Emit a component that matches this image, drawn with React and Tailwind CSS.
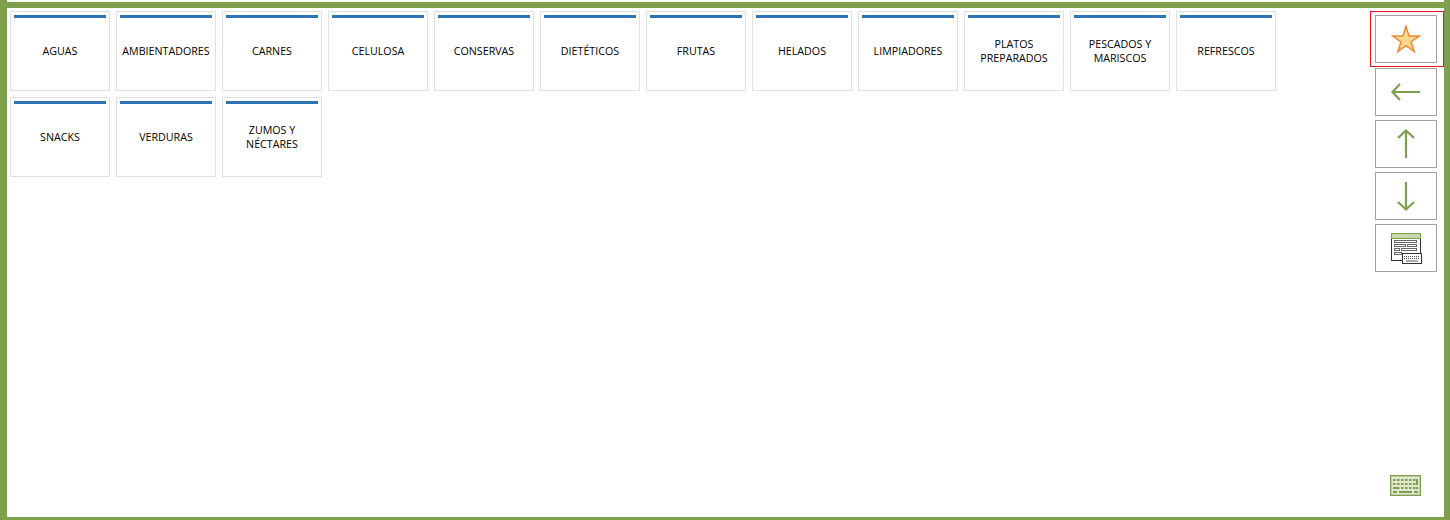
import React from "react";

const categories = [
  ["AGUAS"],
  ["AMBIENTADORES"],
  ["CARNES"],
  ["CELULOSA"],
  ["CONSERVAS"],
  ["DIETÉTICOS"],
  ["FRUTAS"],
  ["HELADOS"],
  ["LIMPIADORES"],
  ["PLATOS", "PREPARADOS"],
  ["PESCADOS Y", "MARISCOS"],
  ["REFRESCOS"],
  ["SNACKS"],
  ["VERDURAS"],
  ["ZUMOS Y", "NÉCTARES"],
];

const GREEN = "#7e9f4c";

const Tile = ({ lines }) => (
  <div className="w-[100px] h-[80px] border border-[#e0e0e0] p-[3px] flex flex-col bg-white">
    <div className="h-[3px] bg-[#2e74b5]"></div>
    <div className="flex-1 pb-[3px] flex flex-col items-center justify-center text-center text-[10.7px] leading-[14px] text-black">
      {lines.map((l) => (
        <span key={l}>{l}</span>
      ))}
    </div>
  </div>
);

const SideButton = ({ children }) => (
  <button className="w-[62px] h-[48px] border border-[#a0a0a0] bg-white flex items-center justify-center">
    {children}
  </button>
);

const Arrow = ({ d }) => (
  <svg width="32" height="32" viewBox="0 0 32 32" fill="none" stroke={GREEN} strokeWidth="2.2">
    <path d={d} />
  </svg>
);

const KeyboardIcon = () => {
  const rows = [4, 8, 12];
  const cols = [3, 7, 11, 15, 19, 23];
  return (
    <svg width="31" height="21" viewBox="0 0 31 21" className="block">
      <rect x="0.5" y="0.5" width="30" height="20" fill="#dfe8cf" stroke={GREEN} />
      <rect x="1.5" y="1.5" width="28" height="18" fill="none" stroke={GREEN} strokeOpacity="0.35" />
      {rows.map((y) =>
        cols.map((x) => <rect key={`${x}-${y}`} x={x} y={y} width="2.5" height="2" fill={GREEN} />)
      )}
      <rect x="3" y="12" width="4" height="2" fill={GREEN} />
      <rect x="26" y="4" width="2" height="6" fill={GREEN} />
      <rect x="26" y="12" width="2" height="2" fill={GREEN} />
      <rect x="3" y="16" width="4" height="2" fill={GREEN} />
      <rect x="9" y="16" width="13" height="2" fill={GREEN} />
      <rect x="24" y="16" width="4" height="2" fill={GREEN} />
    </svg>
  );
};

const FormKeyboardIcon = () => (
  <svg width="32" height="32" viewBox="0 0 32 32" className="block">
    <rect x="1.5" y="1.5" width="29" height="27" fill="#fff" stroke="#333" strokeWidth="1" />
    <rect x="1.5" y="1.5" width="29" height="5" fill="#c6d8ad" stroke={GREEN} />
    <g fill="none" stroke="#666">
      <rect x="4.5" y="8.5" width="22" height="2" />
      <rect x="4.5" y="12.5" width="11" height="2" />
      <rect x="17.5" y="12.5" width="9" height="2" />
      <rect x="4.5" y="16.5" width="5" height="2" />
      <rect x="11.5" y="16.5" width="15" height="2" />
      <rect x="4.5" y="20.5" width="7" height="2" />
    </g>
    <rect x="12.5" y="21.5" width="19" height="10" fill="#fff" stroke="#333" />
    <g stroke="#555" strokeDasharray="1 1">
      <path d="M14 24.5H30" />
      <path d="M14 26.5H30" />
    </g>
    <path d="M16 29H28" stroke="#555" />
  </svg>
);

export default function App() {
  return (
    <div className="h-[520px] flex bg-white border-l-[7px] border-r-[6px] border-b-[3px] border-[#7e9f4c] font-['Open_Sans',sans-serif]">
      <div className="flex-1 flex mt-[2px] border-t-[6px] border-[#7e9f4c] min-w-0">
        <div className="flex-1 min-w-0 pl-[3px] pt-[3px]">
          <div className="flex flex-wrap gap-[6px]">
            {categories.map((lines) => (
              <Tile key={lines[0]} lines={lines} />
            ))}
          </div>
        </div>

        <div className="w-[74px] shrink-0 pt-[3px] flex flex-col">
          <div className="h-[56px] border border-[#e81123] pl-[4px] pt-[3px] mb-[1px]">
            <SideButton>
              <svg width="32" height="32" viewBox="0 0 32 32">
                <path
                  d="M16 3.4 L19.12 13 L29.22 13 L21.05 18.94 L24.17 28.55 L16 22.61 L7.83 28.55 L10.95 18.94 L2.78 13 L12.88 13 Z"
                  fill="#fad98e"
                  stroke="#ec8a38"
                  strokeWidth="1.5"
                  strokeLinejoin="miter"
                />
              </svg>
            </SideButton>
          </div>
          <div className="flex flex-col gap-1 pl-[5px]">
            <SideButton>
              <Arrow d="M30 16H3M10 8L2.5 16L10 24" />
            </SideButton>
            <SideButton>
              <Arrow d="M16 30V3M8 10L16 2.5L24 10" />
            </SideButton>
            <SideButton>
              <Arrow d="M16 2V29M8 22L16 29.5L24 22" />
            </SideButton>
            <SideButton>
              <FormKeyboardIcon />
            </SideButton>
          </div>
          <div className="mt-auto pl-[20px] pb-[21px]">
            <KeyboardIcon />
          </div>
        </div>
      </div>
    </div>
  );
}
